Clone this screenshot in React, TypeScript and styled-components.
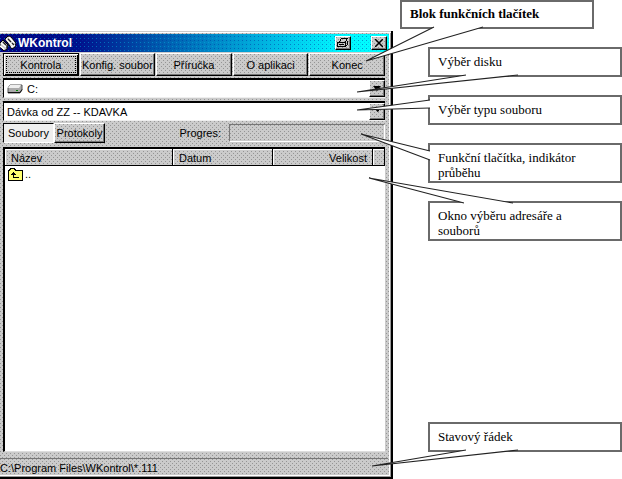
import React from "react";
import styled, { createGlobalStyle, css } from "styled-components";

const dither = css`
  background-color: #cbcbcb;
  background-image: conic-gradient(from 0deg at 1px 1px, transparent 75%, #959595 0),
    conic-gradient(from 0deg at 1px 1px, transparent 75%, #959595 0);
  background-size: 4px 4px, 4px 4px;
  background-position: 0 0, 2px 2px;
`;

const raised = css`
  border: 1px solid;
  border-color: #fff #000 #000 #fff;
  box-shadow: inset -1px -1px 0 #777;
`;

const Global = createGlobalStyle`
  * { box-sizing: border-box; }
  body {
    margin: 0;
    background: #fff;
    color: #000;
    font: 11px/14px "Liberation Sans", Arial, sans-serif;
  }
  button, select, table { font: inherit; color: inherit; }
`;

const Page = styled.main`
  display: flex;
  align-items: stretch;
  gap: 7px;
  min-height: 100vh;
`;

const AppWindow = styled.section`
  ${dither}
  flex: 1;
  min-width: 0;
  margin-top: 31px;
  display: flex;
  flex-direction: column;
  border: solid #000;
  border-width: 0 2px 2px 0;
  box-shadow: inset 0 1px 0 #ccc, inset 0 2px 0 #fff, inset -1px -1px 0 #999, inset -2px -2px 0 #fff;
`;

const TitleBar = styled.header`
  display: flex;
  align-items: center;
  height: 18px;
  margin: 3px 2px 1px 0;
  padding-right: 2px;
  color: #fff;
  background: conic-gradient(from 0deg at 1px 1px, transparent 75%, #00b4e480 0) 0 0 / 4px 4px,
    conic-gradient(from 0deg at 1px 1px, transparent 75%, #0030a080 0) 2px 2px / 4px 4px,
    linear-gradient(90deg, #000080 0%, #00108c 20%, #0050a8 38%, #0090cc 58%, #00c8ec 74%, #00f8ff 88%, #00ffff 100%);
`;

const Title = styled.h1`
  flex: 1;
  margin: 0 0 0 2px;
  font: bold 12px/16px "Liberation Sans", Arial, sans-serif;
`;

const TitleButton = styled.button<{ $apart?: boolean }>`
  ${dither}
  ${raised}
  display: grid;
  place-items: center;
  width: 16px;
  height: 14px;
  padding: 0;
  margin-right: ${(p) => (p.$apart ? 20 : 0)}px;
`;

const Body = styled.div`
  flex: 1;
  display: flex;
  flex-direction: column;
  padding: 0 6px 0 3px;
`;

const Commands = styled.nav`
  display: grid;
  grid-template-columns: repeat(5, 1fr);
  gap: 1px;
`;

const Command = styled.button<{ $focused?: boolean }>`
  ${dither}
  ${raised}
  height: 23px;
  padding: 0;
  white-space: nowrap;
  ${(p) =>
    p.$focused &&
    css`
      border-color: #000;
      box-shadow: inset 1px 1px 0 #fff, inset -1px -1px 0 #000;
      outline: 1px dotted #000;
      outline-offset: -4px;
    `}
`;

const Combo = styled.div<{ $first?: boolean }>`
  display: flex;
  align-items: center;
  height: 20px;
  margin-top: ${(p) => (p.$first ? 2 : 3)}px;
  padding-left: 3px;
  background: #fff;
  border: solid #000;
  border-width: 2px 0 0 1px;
  border-bottom: 1px solid #eee;
  gap: 4px;
`;

const Select = styled.select`
  appearance: none;
  flex: 1;
  min-width: 0;
  height: 16px;
  padding: 0;
  border: 0;
  outline: 0;
  background: transparent;
`;

const Arrow = styled.span`
  ${dither}
  ${raised}
  display: grid;
  place-items: center;
  width: 16px;
  height: 17px;
  pointer-events: none;
`;

const Tools = styled.div`
  display: flex;
  align-items: center;
  height: 20px;
  margin: 2px 0 4px;
`;

const Tab = styled.button<{ $active?: boolean }>`
  ${dither}
  ${raised}
  height: 20px;
  width: 51px;
  padding: 0;
  white-space: nowrap;
  ${(p) =>
    p.$active &&
    css`
      background: #eee;
      border-color: #000 #fff #fff #000;
      box-shadow: none;
    `}
`;

const ProgressLabel = styled.label`
  margin-left: auto;
  padding-left: 8px;
`;

const Progress = styled.progress`
  appearance: none;
  flex: 0 0 156px;
  height: 18px;
  margin-left: 8px;
  border: 1px solid;
  border-color: #777 #fff #fff #777;
  background: transparent;
  &::-webkit-progress-bar { background: transparent; }
  &::-webkit-progress-value { background: #000080; }
`;

const FileList = styled.div`
  flex: 1;
  background: #fff;
  border: solid #000;
  border-width: 2px 0 0 2px;
  border-bottom: 1px solid #ddd;
`;

const Table = styled.table`
  width: 100%;
  table-layout: fixed;
  border-collapse: separate;
  border-spacing: 0;
`;

const Heading = styled.th<{ $width?: number; $right?: boolean }>`
  ${dither}
  width: ${(p) => (p.$width ? `${p.$width}px` : "auto")};
  height: 17px;
  padding: 1px 5px 0 6px;
  border: solid #000;
  border-width: 0 1px 1px 0;
  box-shadow: inset 1px 1px 0 #fff;
  font-weight: normal;
  text-align: ${(p) => (p.$right ? "right" : "left")};
`;

const Cell = styled.td`
  height: 16px;
  padding: 0 3px;
`;

const Entry = styled.span`
  display: flex;
  align-items: center;
  gap: 2px;
`;

const Status = styled.footer`
  height: 19px;
  margin: 6px 3px 0 0;
  padding-top: 2px;
  border-top: 1px solid #777;
  white-space: nowrap;
`;

const Notes = styled.aside`
  flex: 0 0 222px;
  display: flex;
  flex-direction: column;
  gap: 18px;
  padding-bottom: 27px;
`;

const NoteBox = styled.p<{ $lead?: boolean; $last?: boolean }>`
  position: relative;
  margin: ${(p) => (p.$last ? "auto" : "0")} ${(p) => (p.$lead ? 28 : 0)}px 0 ${(p) => (p.$lead ? 0 : 28)}px;
  padding: ${(p) => (p.$lead ? 4 : 5)}px 16px 1px 8px;
  border: 2px solid #6a6a6a;
  background: #fff;
  font: ${(p) => (p.$lead ? "bold" : "normal")} 13px/15px "Liberation Serif", "Times New Roman", serif;
  min-height: ${(p) => (p.$lead ? 29 : 30)}px;
`;

const Tail = styled.svg`
  position: absolute;
  left: -2px;
  top: -2px;
  width: 1px;
  height: 1px;
  overflow: visible;
  pointer-events: none;
`;

type NoteProps = { tail: string; children: React.ReactNode; lead?: boolean; last?: boolean };

function Note({ tail, children, lead, last }: NoteProps) {
  return (
    <NoteBox $lead={lead} $last={last}>
      {children}
      <Tail aria-hidden="true">
        <polyline points={tail} fill="#fff" stroke="#222" strokeWidth="1.1" />
      </Tail>
    </NoteBox>
  );
}

const AppIcon = () => (
  <svg width="16" height="16" viewBox="0 0 16 16" aria-hidden="true">
    <path d="M0 8 3 5l5 5-1 4-3 2-4-4z" fill="#ccc" stroke="#000" />
    <path d="m5 4 3-3 3 1 5 6-1 4-3 2z" fill="#ccc" stroke="#000" />
    <path d="m0 11 4 3M1 8l5 4M6 4l6 6M9 2l5 6M11 12l4-2" stroke="#fff" strokeWidth="1.5" />
    <path d="m3 7 3 3M8 4l3 3M12 8l2 2M7 10v3" stroke="#222" strokeWidth="1.3" />
  </svg>
);

const PrinterIcon = () => (
  <svg width="12" height="10" viewBox="0 0 12 10" fill="none" stroke="#000" shapeRendering="crispEdges" aria-hidden="true">
    <path d="M2.500 4 4.500 .5h6L8.500 4M.5 4.500h8v4h-8zM8.500 8.500l2-2v-4M2 6.500h5" />
  </svg>
);

const CloseIcon = () => (
  <svg width="8" height="8" viewBox="0 0 8 8" stroke="#000" strokeWidth="1.5" aria-hidden="true">
    <path d="m0 0 8 8M8 0 0 8" />
  </svg>
);

const DriveIcon = () => (
  <svg width="16" height="10" viewBox="0 0 16 10" aria-hidden="true">
    <path d="M3 1h12v5l-2 3H1V4z" fill="#aaa" stroke="#555" />
    <path d="M3 1h11l-2 3H1z" fill="#eee" />
    <path d="M1 8.5h12l2-3" fill="none" stroke="#111" />
    <path d="M9 6.5h2" stroke="#080" />
  </svg>
);

const FolderUpIcon = () => (
  <svg width="15" height="13" viewBox="0 0 15 13" shapeRendering="crispEdges" aria-hidden="true">
    <path d="M.5 12.500v-10h1l1-2h4l1 2h7v10z" fill="#ffff70" stroke="#000" />
    <path d="M5.500 4v5.500H11M3 6.500h5M4 5.500h3" fill="none" stroke="#000" />
  </svg>
);

const ArrowIcon = ({ small }: { small?: boolean }) => (
  <svg width="8" height="5" viewBox="0 0 8 5" aria-hidden="true">
    <path d={small ? "M3 1h3v1L4.500 3z" : "M0 0h8L4 5z"} />
  </svg>
);

const commands = ["Kontrola", "Konfig. soubor", "Příručka", "O aplikaci", "Konec"];

export default function App() {
  return (
    <>
      <Global />
      <Page>
        <AppWindow>
          <TitleBar>
            <AppIcon />
            <Title>WKontrol</Title>
            <TitleButton $apart aria-label="Tisk"><PrinterIcon /></TitleButton>
            <TitleButton aria-label="Zavřít"><CloseIcon /></TitleButton>
          </TitleBar>
          <Body>
            <Commands>
              {commands.map((name, i) => (
                <Command key={name} $focused={i === 0}>{name}</Command>
              ))}
            </Commands>
            <Combo $first>
              <DriveIcon />
              <Select aria-label="Výběr disku"><option>C:</option></Select>
              <Arrow><ArrowIcon /></Arrow>
            </Combo>
            <Combo>
              <Select aria-label="Výběr typu souboru"><option>Dávka od ZZ -- KDAVKA</option></Select>
              <Arrow><ArrowIcon small /></Arrow>
            </Combo>
            <Tools>
              <Tab $active aria-pressed="true">Soubory</Tab>
              <Tab aria-pressed="false">Protokoly</Tab>
              <ProgressLabel htmlFor="progress">Progres:</ProgressLabel>
              <Progress id="progress" value={0} max={100} />
            </Tools>
            <FileList>
              <Table>
                <thead>
                  <tr>
                    <Heading scope="col">Název</Heading>
                    <Heading scope="col" $width={100}>Datum</Heading>
                    <Heading scope="col" $width={100} $right>Velikost</Heading>
                    <Heading as="td" $width={12} />
                  </tr>
                </thead>
                <tbody>
                  <tr>
                    <Cell colSpan={4}><Entry><FolderUpIcon />..</Entry></Cell>
                  </tr>
                </tbody>
              </Table>
            </FileList>
          </Body>
          <Status>C:\Program Files\WKontrol\*.111</Status>
        </AppWindow>
        <Notes>
          <Note lead tail="34,27 -34,61 83,27">Blok funkčních tlačítek</Note>
          <Note tail="38,28 -71,45 90,28">Výběr disku</Note>
          <Note tail="2,5 -71,15 2,13">Výběr typu souboru</Note>
          <Note tail="2,8 -67,-9 2,17">Funkční tlačítka, indikátor průběhu</Note>
          <Note tail="36,2 -59,-23 85,2">Okno výběru adresáře a souborů</Note>
          <Note last tail="38,28 -56,44 90,28">Stavový řádek</Note>
        </Notes>
      </Page>
    </>
  );
}
